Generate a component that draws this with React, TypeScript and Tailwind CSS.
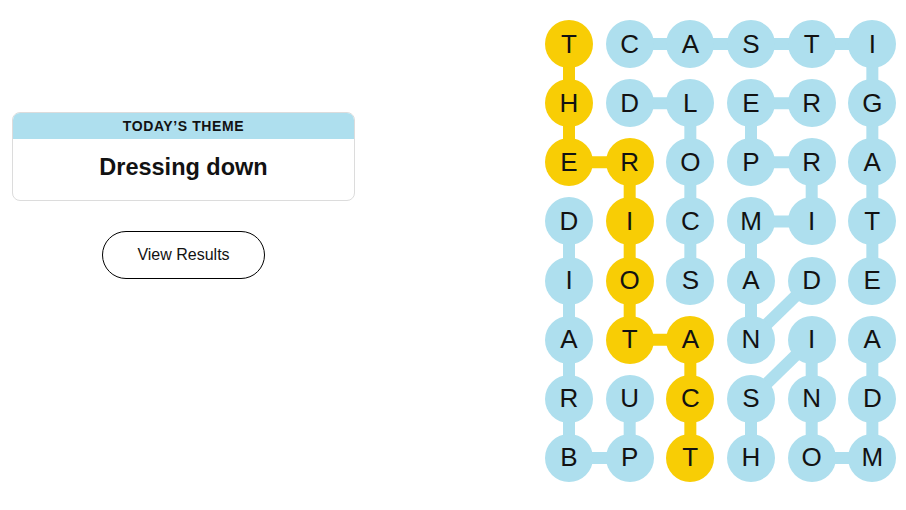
const LETTERS = [
  "TCASTI",
  "HDLERG",
  "EROPRA",
  "DICMIT",
  "IOSADE",
  "ATANIA",
  "RUCSND",
  "BPTHOM",
];

const FOUND: Set<string> = new Set(["0,0", "1,0", "2,0", "2,1", "3,1", "4,1", "5,1", "5,2", "6,2", "7,2"]);

type Edge = [number, number, number, number];

const BLUE_EDGES: Edge[] = [
  [0, 1, 0, 2], [0, 2, 0, 3], [0, 3, 0, 4], [0, 4, 0, 5], [0, 5, 1, 5], [1, 5, 2, 5], [2, 5, 3, 5], [3, 5, 4, 5],
  [5, 5, 6, 5], [6, 5, 7, 5], [7, 5, 7, 4], [7, 4, 6, 4], [6, 4, 5, 4], [5, 4, 6, 3], [6, 3, 7, 3],
  [1, 1, 1, 2], [1, 2, 2, 2], [2, 2, 3, 2], [3, 2, 4, 2],
  [1, 4, 1, 3], [1, 3, 2, 3], [2, 3, 2, 4], [2, 4, 3, 4], [3, 4, 3, 3], [3, 3, 4, 3], [4, 3, 5, 3], [5, 3, 4, 4],
  [3, 0, 4, 0], [4, 0, 5, 0], [5, 0, 6, 0], [6, 0, 7, 0], [7, 0, 7, 1], [7, 1, 6, 1],
];

const YELLOW_EDGES: Edge[] = [
  [0, 0, 1, 0], [1, 0, 2, 0], [2, 0, 2, 1], [2, 1, 3, 1], [3, 1, 4, 1], [4, 1, 5, 1], [5, 1, 5, 2], [5, 2, 6, 2], [6, 2, 7, 2],
];

const cx = (c: number) => 24 + c * 60.67;
const cy = (r: number) => 24 + r * 59.14;

function Board() {
  return (
    <div className="relative mt-[20px] ml-[190px] w-[351px]">
      <svg className="absolute inset-0" width="352" height="462">
        {BLUE_EDGES.map(([r1, c1, r2, c2], i) => (
          <line key={"b" + i} x1={cx(c1)} y1={cy(r1)} x2={cx(c2)} y2={cy(r2)} stroke="#aedfee" strokeWidth={12} />
        ))}
        {YELLOW_EDGES.map(([r1, c1, r2, c2], i) => (
          <line key={"y" + i} x1={cx(c1)} y1={cy(r1)} x2={cx(c2)} y2={cy(r2)} stroke="#f8cd05" strokeWidth={12} />
        ))}
      </svg>
      <div className="relative grid grid-cols-[repeat(6,48px)] gap-x-[12.67px] gap-y-[11.14px]">
        {LETTERS.map((row, r) =>
          row.split("").map((ch, c) => (
            <div
              key={r + "-" + c}
              className={
                "flex h-12 w-12 items-center justify-center rounded-full text-[26px] text-[#121212] " +
                (FOUND.has(r + "," + c) ? "bg-[#f8cd05]" : "bg-[#aedfee]")
              }
            >
              {ch}
            </div>
          ))
        )}
      </div>
    </div>
  );
}

export default function App() {
  return (
    <main className="flex h-[510px] w-[906px] bg-white font-['Liberation_Sans',Arial,sans-serif] text-[#121212]">
      <div className="ml-3 mt-[112px] flex w-[343px] flex-col items-center">
        <div className="w-full overflow-hidden rounded-lg border border-[#dcdcdc]">
          <div className="flex h-[26px] items-center justify-center bg-[#aedfee] text-[14px] font-bold tracking-[0.6px]">
            TODAY’S THEME
          </div>
          <div className="flex h-[61px] items-center justify-center pb-1 text-[23.5px] font-bold">
            Dressing down
          </div>
        </div>
        <button className="mt-[30px] h-12 w-[163px] rounded-full border border-black text-[16px]">
          View Results
        </button>
      </div>
      <Board />
    </main>
  );
}
